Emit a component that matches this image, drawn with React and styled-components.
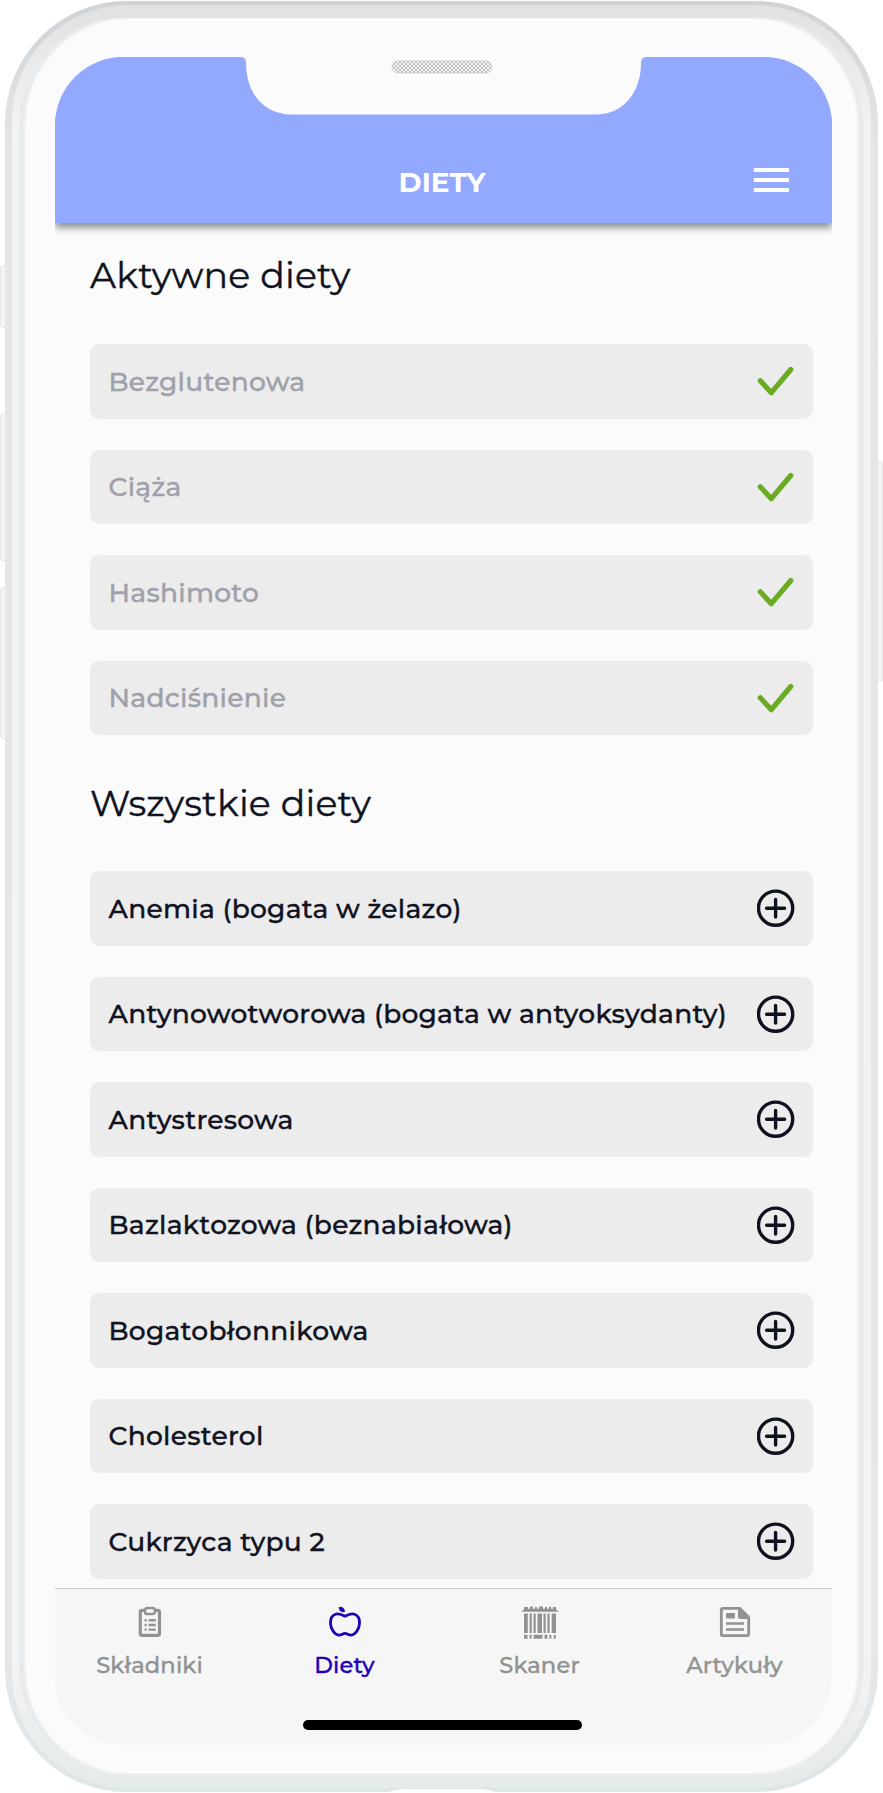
import React from 'react';
import styled, { createGlobalStyle, css } from 'styled-components';

const activeDiets = ['Bezglutenowa', 'Ciąża', 'Hashimoto', 'Nadciśnienie'];

const allDiets = [
  'Anemia (bogata w żelazo)',
  'Antynowotworowa (bogata w antyoksydanty)',
  'Antystresowa',
  'Bazlaktozowa (beznabiałowa)',
  'Bogatobłonnikowa',
  'Cholesterol',
  'Cukrzyca typu 2',
];

const CheckIcon = () => (
  <svg width="38" height="38" viewBox="0 0 38 38" fill="none" stroke="#6aab23" strokeWidth="5.2" strokeLinecap="round" strokeLinejoin="round">
    <path d="M3.3 18.7L14.3 30.7L33.8 7.5" />
  </svg>
);

const PlusIcon = () => (
  <svg width="38" height="38" viewBox="0 0 38 38" fill="none" stroke="#0e121d" strokeWidth="3.4" strokeLinecap="round">
    <circle cx="18.6" cy="19.2" r="17.1" />
    <path d="M9.6 19.2h18M18.6 10.4v17.6" />
  </svg>
);

const MenuIcon = () => (
  <svg width="36" height="26" viewBox="0 0 36 26" fill="#fff">
    <path d="M.8 1H36v4H.8zM.8 11H36v4H.8zM.8 21H36v4H.8z" />
  </svg>
);

const ClipboardIcon = () => (
  <svg width="24" height="32" viewBox="0 0 24 32" fill="none" stroke="currentColor">
    <rect x="2.3" y="4.3" width="19.2" height="25" rx="1.8" strokeWidth="3.2" />
    <rect x="7" y="2" width="10" height="6" rx="2.6" fill="#f6f6f6" strokeWidth="2.6" />
    <path d="M6.5 14.2h2.2M6.5 19h2.2M6.5 23.6h2.2M10.5 14.2h7.3M10.5 19h7.3M10.5 23.6h7.3" strokeWidth="2.4" />
  </svg>
);

const AppleIcon = () => (
  <svg width="34" height="32" viewBox="0 0 34 32" fill="none" stroke="currentColor">
    <path d="M17 10.2C14 8.6 11 7.3 8.2 8C4 9.2 2.2 13 2.5 17.6C2.8 22.5 6.2 28.6 10.8 29.2C13.4 29.5 14.8 27.3 17 27.3C19.2 27.3 20.6 29.5 23.2 29.2C27.8 28.6 31.2 22.5 31.5 17.6C31.8 13 30 9.2 25.8 8C23 7.3 20 8.6 17 10.2Z" strokeWidth="2.8" strokeLinejoin="round" />
    <path d="M11.2 1.5C14.5 0.6 16.6 2.8 16.3 5.7C13.2 6.2 11 4.3 11.2 1.5Z" fill="currentColor" strokeWidth="1" />
  </svg>
);

const BarcodeIcon = () => (
  <svg width="38" height="34" viewBox="0 0 38 34" fill="currentColor">
    <path d="M0 5.7L4 2.8H34L38 5.7z" />
    <path d="M3 1h4v3H3zM9 .5h3v4H9zM14 1h2v3h-2zM18 .5h4v4h-4zM24 1h2v3h-2zM28 .5h2v4h-2zM32 1h3v3h-3z" />
    <path d="M3 7.5h3.8v19.5H3zM8.6 7.5h2.2v19.5h-2.2zM12.5 7.5h2.2v19.5h-2.2zM16.5 7.5h4.5v19.5h-4.5zM22.5 7.5h2.2v19.5h-2.2zM26.4 7.5h2.2v19.5h-2.2zM30.7 7.5h4.3v19.5h-4.3z" />
    <path d="M3 28.8h3.5v4H3zM8.6 28.8h2v4h-2zM12.5 28.8h9v4h-9zM23.5 28.8h3v4h-3zM28.4 28.8h2v4h-2zM32.7 28.8h2v4h-2z" />
  </svg>
);

const ArticleIcon = () => (
  <svg width="32" height="32" viewBox="0 0 32 32" fill="none" stroke="currentColor">
    <path d="M20 2.3H3.8Q2.3 2.3 2.3 3.8V28Q2.3 29.6 3.8 29.6H28.2Q29.7 29.6 29.7 28V11" strokeWidth="2.8" />
    <path d="M19 1H21.5L31 10.5V13H21.5Q19 13 19 10.5Z" fill="currentColor" stroke="none" />
    <path d="M7.8 7.8h7.4v4h-7.4z" fill="currentColor" strokeWidth="1.6" strokeLinejoin="round" />
    <path d="M7 17.4h18M7 23.4h18" strokeWidth="2.5" />
  </svg>
);

const tabs = [
  { label: 'Składniki', icon: ClipboardIcon },
  { label: 'Diety', icon: AppleIcon, active: true },
  { label: 'Skaner', icon: BarcodeIcon },
  { label: 'Artykuły', icon: ArticleIcon },
];

const App = () => (
  <Stage>
    <GlobalStyle />
    <SideButton $top={265} $height={63} />
    <SideButton $top={413} $height={148} />
    <SideButton $top={587} $height={152} />
    <SideButton $top={461} $height={221} $right />
    <Frame>
      <Rim>
        <Bezel>
          <Screen>
            <Header>
              <Title>DIETY</Title>
              <MenuButton aria-label="Menu"><MenuIcon /></MenuButton>
            </Header>
            <Content>
              <Heading>Aktywne diety</Heading>
              <List>
                {activeDiets.map((name) => (
                  <Row key={name} $muted>
                    <Label>{name}</Label>
                    <CheckIcon />
                  </Row>
                ))}
              </List>
              <Heading $second>Wszystkie diety</Heading>
              <List>
                {allDiets.map((name) => (
                  <Row key={name}>
                    <Label>{name}</Label>
                    <PlusIcon />
                  </Row>
                ))}
              </List>
            </Content>
            <TabBar>
              <Tabs>
                {tabs.map(({ label, icon: Icon, active }) => (
                  <Tab key={label} $active={active}>
                    <IconBox><Icon /></IconBox>
                    <TabLabel>{label}</TabLabel>
                  </Tab>
                ))}
              </Tabs>
              <HomeIndicator />
            </TabBar>
          </Screen>
        </Bezel>
      </Rim>
    </Frame>
    <Notch width="397" height="60" viewBox="0 0 397 60">
      <defs>
        <pattern id="mesh" width="4" height="4" patternUnits="userSpaceOnUse">
          <rect width="4" height="4" fill="#f3f4f4" />
          <rect width="2" height="2" fill="#bfc1c1" />
          <rect x="2" y="2" width="2" height="2" fill="#bfc1c1" />
        </pattern>
      </defs>
      <path d="M-4 0V2H-4Q1 2 1 8C1 36 17 59.5 47 59.5H350C380 59.5 396 36 396 8Q396 2 401 2V0Z" fill="#fbfbfc" />
      <rect x="147" y="6" width="100" height="12" rx="6" fill="url(#mesh)" stroke="#c9cbcb" strokeWidth="0.8" />
    </Notch>
    <Port width="126" height="5" viewBox="0 0 126 5">
      <path d="M0 5C12 5 14 1 26 1H100C112 1 114 5 126 5Z" fill="#fff" />
    </Port>
  </Stage>
);

const GlobalStyle = createGlobalStyle`
  * {
    box-sizing: border-box;
  }
  body {
    margin: 0;
    background: #fff;
    font-family: Montserrat, Inter, sans-serif;
  }
`;

const Stage = styled.div`
  position: relative;
  width: 883px;
  height: 1793px;
  padding: 1px 5px;
  overflow: hidden;
`;

const SideButton = styled.div`
  position: absolute;
  top: ${(props) => props.$top}px;
  height: ${(props) => props.$height}px;
  width: 8px;
  background: #f3f4f4;
  border: 1px solid #e6e8e8;
  ${(props) => (props.$right
    ? css`right: 0; border-radius: 0 3px 3px 0;`
    : css`left: 0; border-radius: 3px 0 0 3px;`)}
`;

const Frame = styled.div`
  position: relative;
  height: 1791px;
  padding: 4px 7px;
  border-radius: 122px;
  background: linear-gradient(#cfd3d6, #e4e5e6 8%, #e5e7e8 92%, #dfe6e8);
`;

const Rim = styled.div`
  height: 100%;
  padding: 13px 7px 14px;
  border-radius: 115px;
  background: linear-gradient(#dfe1e3, #f2f3f3 7%, #f2f3f4 93%, #e6eaeb);
`;

const Bezel = styled.div`
  height: 100%;
  padding: 39px 32px 29px 36px;
  border-radius: 106px;
  background: #fbfbfc;
  box-shadow: inset 6px 0 2px #e8ebed, inset -6px 0 2px #e8eaec;
`;

const Screen = styled.div`
  display: flex;
  flex-direction: column;
  height: 1688px;
  border-radius: 68px;
  overflow: hidden;
`;

const Header = styled.header`
  position: relative;
  flex: none;
  display: grid;
  grid-template-columns: 1fr auto 1fr;
  align-items: end;
  height: 166px;
  padding: 0 43px 30px 40px;
  background: #93a8ff;
  box-shadow: 0 5px 7px #8b9390;
`;

const Title = styled.h1`
  grid-column: 2;
  margin: 0;
  color: #fff;
  font-size: 28px;
  line-height: 21px;
  font-weight: 700;
`;

const MenuButton = styled.button`
  justify-self: end;
  display: flex;
  padding: 0;
  border: 0;
  background: none;
`;

const Content = styled.main`
  flex: none;
  height: 1365px;
  padding: 31px 19px 0 35px;
  background: #fbfbfc;
`;

const Heading = styled.h2`
  margin: ${(props) => (props.$second ? '47px' : '0')} 0 ${(props) => (props.$second ? '47px' : '48px')};
  color: #0f1320;
  font-size: 36.3px;
  line-height: 42px;
  font-weight: 400;
  letter-spacing: 0.2px;
  -webkit-text-stroke: 0.4px;
`;

const List = styled.div`
  display: flex;
  flex-direction: column;
  gap: 31px;
`;

const Row = styled.div`
  display: flex;
  align-items: center;
  justify-content: space-between;
  height: 74.5px;
  padding: 0 18.5px;
  border-radius: 9px;
  background: #ececec;
  color: ${(props) => (props.$muted ? '#9fa0aa' : '#10131f')};
`;

const Label = styled.span`
  font-size: 26.5px;
  font-weight: 500;
  white-space: nowrap;
  letter-spacing: 0.27px;
  -webkit-text-stroke: 0.35px;
`;

const TabBar = styled.nav`
  flex: 1;
  display: flex;
  flex-direction: column;
  align-items: center;
  border-top: 1px solid #c9c9c9;
  background: #f6f6f6;
`;

const Tabs = styled.div`
  display: flex;
  align-self: stretch;
  height: 131px;
  margin-left: -3px;
  padding-top: 17px;
`;

const Tab = styled.div`
  flex: 1;
  display: flex;
  flex-direction: column;
  align-items: center;
  color: ${(props) => (props.$active ? '#2200b5' : '#919392')};
`;

const IconBox = styled.div`
  display: flex;
  height: 34px;
`;

const TabLabel = styled.span`
  margin-top: 11px;
  font-size: 22.6px;
  line-height: 28px;
  font-weight: 500;
  letter-spacing: 0.15px;
  -webkit-text-stroke: 0.35px;
`;

const HomeIndicator = styled.div`
  width: 279px;
  height: 10px;
  margin-right: 3px;
  border-radius: 5px;
  background: #000;
`;

const Notch = styled.svg`
  position: absolute;
  top: 55px;
  left: 245px;
  overflow: visible;
`;

const Port = styled.svg`
  position: absolute;
  bottom: 0;
  left: 379px;
`;

export default App;
